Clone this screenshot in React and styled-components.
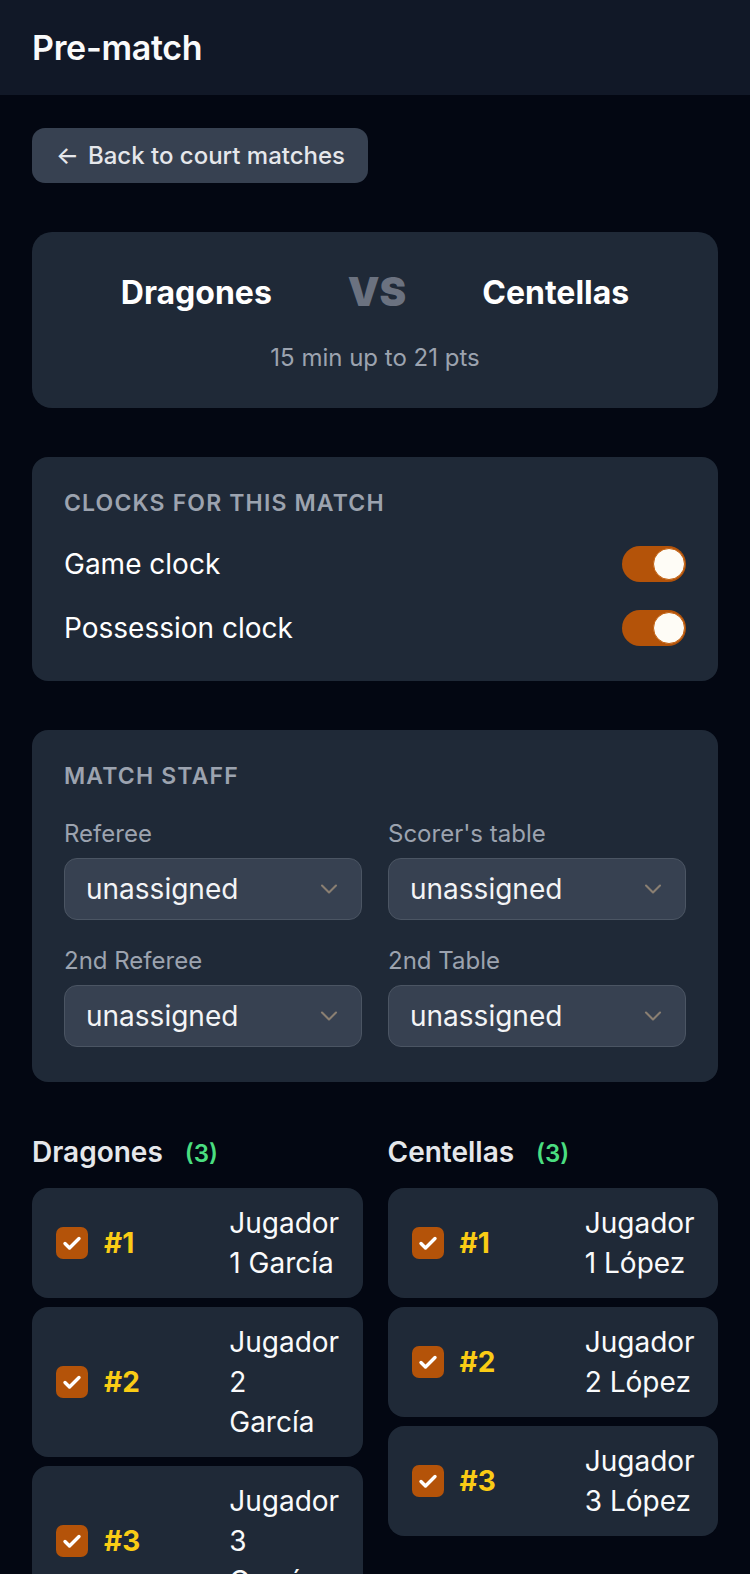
import React from "react";
import styled, { createGlobalStyle } from "styled-components";

const Global = createGlobalStyle`
  * { box-sizing: border-box; }
  html, body { margin: 0; padding: 0; background: #030712; }
  body { font-family: Inter, "Noto Sans", "Liberation Sans", sans-serif; color: #f9fafb; }
`;

const Page = styled.div`
  min-height: 1574px;
  background: #030712;
`;

const Header = styled.header`
  height: 95px;
  background: #111827;
  display: flex;
  align-items: center;
  padding: 0 32px;
`;

const Title = styled.h1`
  margin: 0;
  font-size: 34px;
  font-weight: 600;
  color: #f9fafb;
  letter-spacing: -0.3px;
`;

const Main = styled.main`
  padding: 33px 32px 32px;
  display: flex;
  flex-direction: column;
  gap: 49px;
`;

const BackButton = styled.button`
  align-self: flex-start;
  height: 55px;
  padding: 0 23px 0 24px;
  display: inline-flex;
  align-items: center;
  gap: 9px;
  border: none;
  border-radius: 13px;
  background: #374151;
  color: #e5e7eb;
  font-family: inherit;
  font-size: 24px;
  font-weight: 500;
`;

const Card = styled.section`
  background: #1f2937;
  border-radius: ${(p) => p.$radius || 16}px;
  padding: ${(p) => p.$pad || "32px"};
`;

const VsRow = styled.div`
  display: flex;
  justify-content: center;
  align-items: center;
  gap: 76px;
  height: 56px;
`;

const TeamName = styled.div`
  font-size: 32px;
  font-weight: 700;
  color: #ffffff;
`;

const Vs = styled.div`
  font-size: 40px;
  font-weight: 900;
  color: #6b7280;
  line-height: 56px;
`;

const Sub = styled.div`
  margin-top: 22px;
  text-align: center;
  font-size: 24px;
  line-height: 32px;
  color: #9ca3af;
`;

const SectionTitle = styled.h2`
  margin: 0 0 ${(p) => p.$mb || 23}px;
  font-size: 23px;
  line-height: 28px;
  font-weight: 600;
  letter-spacing: 0.05em;
  text-transform: uppercase;
  color: #9ca3af;
`;

const ToggleList = styled.div`
  display: flex;
  flex-direction: column;
  gap: 16px;
`;

const ToggleRow = styled.div`
  height: 48px;
  display: flex;
  align-items: center;
  justify-content: space-between;
  font-size: 28px;
  color: #ffffff;
`;

const Track = styled.span`
  position: relative;
  width: 64px;
  height: 36px;
  border-radius: 18px;
  background: #b45309;
  flex-shrink: 0;
`;

const Knob = styled.span`
  position: absolute;
  top: 2px;
  right: 1px;
  width: 32px;
  height: 32px;
  border-radius: 50%;
  background: #fefcf6;
  border: 1px solid #c2600f;
`;

const StaffGrid = styled.div`
  display: grid;
  grid-template-columns: 1fr 1fr;
  column-gap: 26px;
  row-gap: 27px;
`;

const Field = styled.label`
  display: flex;
  flex-direction: column;
  gap: 10px;
`;

const FieldLabel = styled.span`
  font-size: 24px;
  line-height: 28px;
  color: #9ca3af;
`;

const Select = styled.div`
  height: 62px;
  display: flex;
  align-items: center;
  justify-content: space-between;
  padding: 0 18px 0 21px;
  background: #374151;
  border: 1.5px solid #4b5563;
  border-radius: 13px;
  font-size: 28px;
  color: #f3f4f6;
`;

const Teams = styled.div`
  display: grid;
  grid-template-columns: 1fr 1fr;
  column-gap: 25px;
`;

const TeamColumn = styled.div`
  display: flex;
  flex-direction: column;
  gap: 9px;
`;

const TeamHeader = styled.div`
  display: flex;
  align-items: baseline;
  gap: 22px;
  height: 40px;
  line-height: 40px;
  margin: 1px 0 7px;
`;

const TeamTitle = styled.span`
  font-size: 28px;
  font-weight: 600;
  color: #e5e7eb;
`;

const Count = styled.span`
  font-size: 24px;
  font-weight: 600;
  color: #4ade80;
`;

const PlayerCard = styled.div`
  display: flex;
  align-items: center;
  gap: 16px;
  padding: 15px 24px;
  background: #1f2937;
  border-radius: 16px;
`;

const Checkbox = styled.span`
  width: 32px;
  height: 32px;
  flex-shrink: 0;
  border-radius: 7px;
  background: #b45309;
  display: flex;
  align-items: center;
  justify-content: center;
`;

const Number = styled.span`
  flex: 1;
  font-size: 28px;
  font-weight: 700;
  color: #facc15;
`;

const PlayerName = styled.span`
  flex: 1;
  min-width: 0;
  font-size: 28px;
  line-height: 40px;
  color: #f9fafb;
`;

const Chevron = () => (
  <svg width="28" height="28" viewBox="0 0 24 24" fill="none" stroke="#8a7f72" strokeWidth="1.8" strokeLinecap="round" strokeLinejoin="round">
    <path d="m6 9 6 6 6-6" />
  </svg>
);

const Check = () => (
  <svg width="24" height="24" viewBox="0 0 24 24" fill="none" stroke="#ffffff" strokeWidth="3.4" strokeLinecap="round" strokeLinejoin="round">
    <path d="M5 12.5l4.5 4.5L19 7.5" />
  </svg>
);

const teams = [
  { name: "Dragones", players: ["Jugador 1 García", "Jugador 2 García", "Jugador 3 García"] },
  { name: "Centellas", players: ["Jugador 1 López", "Jugador 2 López", "Jugador 3 López"] },
];

const staff = ["Referee", "Scorer's table", "2nd Referee", "2nd Table"];

export default function App() {
  return (
    <Page>
      <Global />
      <Header>
        <Title>Pre-match</Title>
      </Header>
      <Main>
        <BackButton>
          <span>←</span>
          <span>Back to court matches</span>
        </BackButton>

        <Card $radius={20} $pad="32px 32px 34px">
          <VsRow>
            <TeamName>Dragones</TeamName>
            <Vs>VS</Vs>
            <TeamName>Centellas</TeamName>
          </VsRow>
          <Sub>15 min up to 21 pts</Sub>
        </Card>

        <Card $pad="32px 32px 29px">
          <SectionTitle>Clocks for this match</SectionTitle>
          <ToggleList>
            {["Game clock", "Possession clock"].map((t) => (
              <ToggleRow key={t}>
                <span>{t}</span>
                <Track>
                  <Knob />
                </Track>
              </ToggleRow>
            ))}
          </ToggleList>
        </Card>

        <Card $pad="32px 32px 35px">
          <SectionTitle $mb={30}>Match staff</SectionTitle>
          <StaffGrid>
            {staff.map((s) => (
              <Field key={s}>
                <FieldLabel>{s}</FieldLabel>
                <Select>
                  <span>unassigned</span>
                  <Chevron />
                </Select>
              </Field>
            ))}
          </StaffGrid>
        </Card>

        <Teams>
          {teams.map((team) => (
            <TeamColumn key={team.name}>
              <TeamHeader>
                <TeamTitle>{team.name}</TeamTitle>
                <Count>({team.players.length})</Count>
              </TeamHeader>
              {team.players.map((p, i) => (
                <PlayerCard key={p}>
                  <Checkbox>
                    <Check />
                  </Checkbox>
                  <Number>#{i + 1}</Number>
                  <PlayerName>{p}</PlayerName>
                </PlayerCard>
              ))}
            </TeamColumn>
          ))}
        </Teams>
      </Main>
    </Page>
  );
}
